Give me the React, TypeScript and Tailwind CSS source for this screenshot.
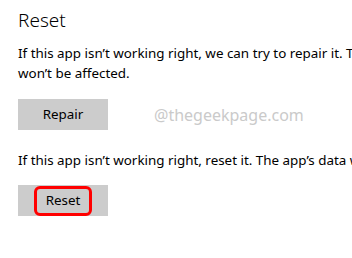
import React from 'react';

const font = { fontFamily: '"Noto Sans", "Open Sans", sans-serif' };

function App() {
  return (
    <div
      className="w-[352px] h-[258px] bg-white overflow-hidden pl-[18px] text-black"
      style={font}
    >
      {/* Section heading */}
      <h2 className="pt-[6px] text-[19px] leading-[28px] font-light">Reset</h2>

      <p className="mt-[9px] text-[13.4px] leading-[20px] whitespace-nowrap">
        If this app isn’t working right, we can try to repair it. The app’s data
        <br />
        won’t be affected.
      </p>

      <div className="mt-[16px] flex items-center gap-[46px]">
        <button className="w-[90px] h-[31px] bg-[#cccccc] text-[13.4px] text-black">
          Repair
        </button>
        <span className="text-[16px] text-[#cacaca] whitespace-nowrap">@thegeekpage.com</span>
      </div>

      <p className="mt-[20px] text-[13.4px] leading-[20px] whitespace-nowrap">
        If this app isn’t working right, reset it. The app’s data will be deleted, including preferences.
      </p>

      <button className="mt-[15px] w-[90px] h-[31px] bg-[#cccccc] flex items-center justify-center text-[13.4px] text-black">
        <span className="w-[58px] h-[30px] border-[3px] border-[#ff0000] rounded-[6px] flex items-center justify-center">
          Reset
        </span>
      </button>
    </div>
  );
}

export default App;
